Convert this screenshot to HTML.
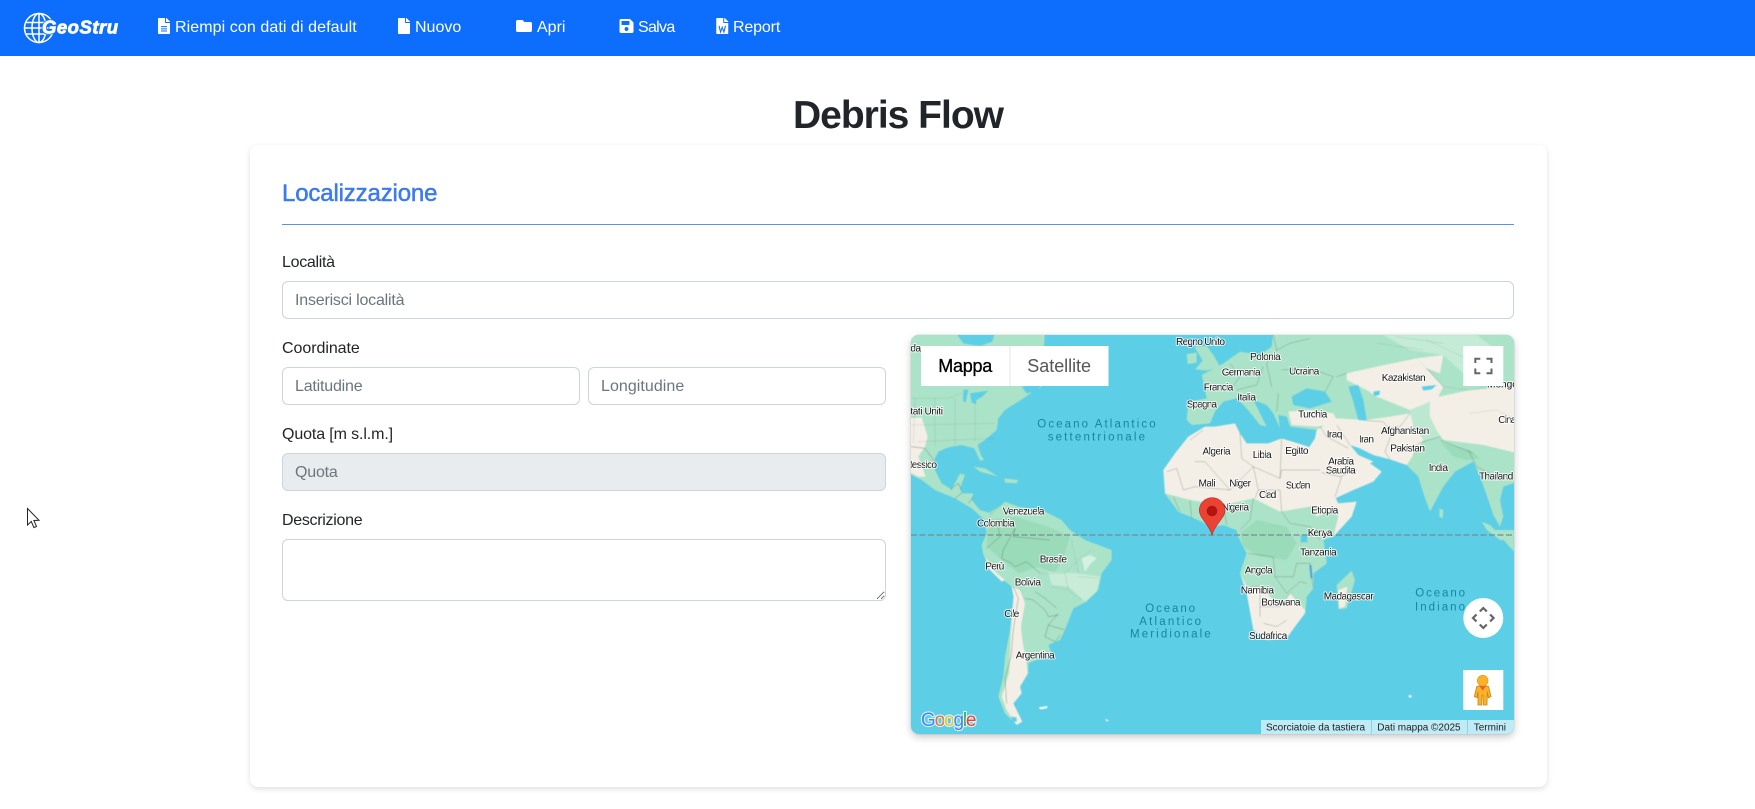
<!DOCTYPE html>
<html lang="it">
<head>
<meta charset="utf-8">
<title>Debris Flow</title>
<style>
*{box-sizing:border-box}
html,body{margin:0;padding:0;background:#fff}
body{position:relative;width:1755px;height:809px;overflow:hidden;font-family:"Liberation Sans",Arial,sans-serif;color:#212529;font-size:16px}
nav{position:absolute;left:0;top:0;width:1755px;height:56px;background:#0d6efd}
nav a{position:absolute;top:16px;color:#fff;text-decoration:none;line-height:24px;font-size:16px;white-space:nowrap}
nav svg.i{position:absolute;fill:#fff}
h1{position:absolute;left:700px;width:396px;top:91.500px;margin:0;text-align:center;font-size:39px;line-height:48px;font-weight:700;letter-spacing:-1px;color:#212529}
.card{position:absolute;left:250px;top:145px;width:1296.500px;height:642px;background:#fff;border-radius:8px;box-shadow:0 2px 6px rgba(0,0,0,.13)}
h2{position:absolute;left:282px;top:179px;margin:0;font-size:24px;line-height:30px;font-weight:400;color:#3b7bef;-webkit-text-stroke:.5px #3b7bef;letter-spacing:-.15px}
hr{position:absolute;left:282px;top:224px;width:1232px;height:1px;margin:0;border:0;background:#5c8fe8}
label{position:absolute;left:282px;line-height:24px;font-size:16px;letter-spacing:-.3px;color:#212529}
input,textarea{position:absolute;border:1px solid #ced4da;border-radius:6px;background:#fff;padding:7px 12px 5px;font:16px/24px "Liberation Sans",Arial,sans-serif;color:#212529;outline:0;margin:0;letter-spacing:-.2px}
input{height:38px}
::placeholder{color:#6c757d;opacity:1}
input:disabled{background:#e9ecef}
#map{position:absolute;left:911px;top:335px;width:603px;height:399px;border-radius:8px;overflow:hidden;background:#5ccee5}
#mapshadow{position:absolute;left:911px;top:335px;width:603px;height:399px;border-radius:8px;box-shadow:0 3px 8px rgba(0,0,0,.22),0 0 1px rgba(0,0,0,.3)}
#map svg{position:absolute;left:0;top:0;display:block}
.land{filter:blur(.45px)}
.lb text{font:10.200px "Liberation Sans",Arial,sans-serif;fill:#111;stroke:#fff;stroke-width:2px;stroke-opacity:.8;paint-order:stroke;stroke-linejoin:round}
.ws text{font:11.500px "Liberation Sans",Arial,sans-serif;fill:#17879f}
.at text{font:10px "Liberation Sans",Arial,sans-serif;fill:#222}
#cursor{position:absolute;left:26px;top:507px}
</style>
</head>
<body>
<nav>
  <svg style="position:absolute;left:20px;top:10px" width="105" height="36" viewBox="20 10 105 36">
    <g fill="none" stroke="#fff" stroke-width="1.500">
      <circle cx="39" cy="28" r="14.500"/>
      <ellipse cx="39" cy="28" rx="7" ry="14.500"/>
      <path d="M39 13.500V42.500M25.500 22.500H52M24.500 28H53.500M26 34H52"/>
    </g>
    <text x="42" y="33.500" font-family="Liberation Sans,Arial,sans-serif" font-size="18.500" font-weight="700" font-style="italic" fill="#fff" stroke="#0d6efd" stroke-width="2.500" paint-order="stroke" textLength="76">GeoStru</text>
    <text x="42" y="33.500" font-family="Liberation Sans,Arial,sans-serif" font-size="18.500" font-weight="700" font-style="italic" fill="#fff" stroke="#fff" stroke-width=".8" textLength="76">GeoStru</text>
  </svg>

  <svg class="i" style="left:158px;top:17.500px" width="12" height="16" viewBox="0 0 384 512"><path d="M224 136V0H24C10.700 0 0 10.700 0 24v464c0 13.300 10.700 24 24 24h336c13.300 0 24-10.700 24-24V160H248c-13.200 0-24-10.800-24-24zm160-14.100v6.100H256V0h6.100c6.400 0 12.500 2.500 17 7l97.900 98c4.500 4.500 7 10.600 7 16.900z"/><path fill="#0d6efd" d="M96 260h192v32H96zM96 330h192v32H96zM96 400h192v32H96z"/></svg>
  <a href="#" style="left:175px;letter-spacing:.08px">Riempi con dati di default</a>

  <svg class="i" style="left:398px;top:17.500px" width="12" height="16" viewBox="0 0 384 512"><path d="M224 136V0H24C10.700 0 0 10.700 0 24v464c0 13.300 10.700 24 24 24h336c13.300 0 24-10.700 24-24V160H248c-13.200 0-24-10.800-24-24zm160-14.100v6.100H256V0h6.100c6.400 0 12.500 2.500 17 7l97.900 98c4.500 4.500 7 10.600 7 16.900z"/></svg>
  <a href="#" style="left:415px">Nuovo</a>

  <svg class="i" style="left:516px;top:18px" width="16" height="16" viewBox="0 0 512 512"><path d="M464 128H272l-64-64H48C21.490 64 0 85.490 0 112v288c0 26.510 21.490 48 48 48h416c26.510 0 48-21.490 48-48V176c0-26.510-21.490-48-48-48z"/></svg>
  <a href="#" style="left:537px">Apri</a>

  <svg class="i" style="left:619px;top:18px" width="15" height="16" viewBox="0 0 448 512"><path d="M433.941 129.941l-83.882-83.882A48 48 0 0 0 316.118 32H48C21.490 32 0 53.490 0 80v352c0 26.510 21.490 48 48 48h352c26.510 0 48-21.490 48-48V163.882a48 48 0 0 0-14.059-33.941zM224 416c-35.346 0-64-28.654-64-64 0-35.346 28.654-64 64-64s64 28.654 64 64c0 35.346-28.654 64-64 64zm96-304.520V212c0 6.627-5.373 12-12 12H76c-6.627 0-12-5.373-12-12V108c0-6.627 5.373-12 12-12h228.520c3.183 0 6.235 1.264 8.485 3.515l3.480 3.480A11.996 11.996 0 0 1 320 111.480z"/></svg>
  <a href="#" style="left:638px;letter-spacing:-.7px">Salva</a>

  <svg class="i" style="left:716px;top:18px" width="12.500" height="16" viewBox="0 0 384 512"><path d="M224 136V0H24C10.700 0 0 10.700 0 24v464c0 13.300 10.700 24 24 24h336c13.300 0 24-10.700 24-24V160H248c-13.200 0-24-10.800-24-24zm160-14.100v6.100H256V0h6.100c6.400 0 12.500 2.500 17 7l97.900 98c4.500 4.500 7 10.600 7 16.900z"/><path fill="none" stroke="#0d6efd" stroke-width="34" d="M88 250l50 200 54-150 54 150 50-200"/></svg>
  <a href="#" style="left:733px;letter-spacing:-.15px">Report</a>
</nav>

<h1>Debris Flow</h1>
<div class="card"></div>
<h2>Localizzazione</h2>
<hr>

<label style="top:251px">Località</label>
<input type="text" placeholder="Inserisci località" style="left:282px;top:281px;width:1232px">
<label style="top:337px;letter-spacing:-.05px">Coordinate</label>
<input type="text" placeholder="Latitudine" style="left:282px;top:367px;width:298px">
<input type="text" placeholder="Longitudine" style="left:588px;top:367px;width:298px;letter-spacing:.05px">
<label style="top:423px;letter-spacing:-.12px">Quota [m s.l.m.]</label>
<input type="text" placeholder="Quota" disabled style="left:282px;top:453px;width:604px">
<label style="top:509px">Descrizione</label>
<textarea style="left:282px;top:539px;width:604px;height:62px"></textarea>

<div id="mapshadow"></div>
<div id="map">
<svg width="603" height="399" viewBox="911 335 603 399">
  <g class="land">
  <!-- Americas north -->
  <g transform="translate(905,330) scale(.33333)">
    <path fill="#abe3c8" d="M10,10 L420,10 L412,110 L410,170 L370,195 L340,215 L300,240 L280,265 L275,300 L240,330 L218,345 L228,375 L237,390 L225,392 L208,355 L170,345 L130,352 L100,365 L90,385 L90,420 L110,460 L140,478 L165,430 L180,435 L165,475 L170,490 L205,490 L200,510 L225,540 L260,550 L245,575 L200,535 L150,505 L90,480 L50,450 L10,430 Z"/>
    <path fill="#5ccee5" d="M150,5 L270,5 L262,35 L225,48 L175,40 Z"/>
    <path fill="#f4efe6" d="M10,265 L50,262 L68,320 L60,350 L40,380 L62,440 L40,440 L10,425 Z"/>
    <path fill="#5ccee5" d="M175,180 L190,178 L182,218 L174,212 Z M195,190 L250,182 L232,200 L212,212 L215,222 L200,218 Z M350,170 L410,160 L395,185 L365,190 Z"/>
    <path fill="none" stroke="#6d7f78" stroke-width="1.200" stroke-dasharray="5 3" opacity=".6" d="M20,205 L130,205 L170,190 M20,285 L270,280 M90,205 L90,345 M150,205 L150,345 M210,215 L210,335 M40,335 L270,325 M30,205 L25,340"/>
    <path fill="none" stroke="#5f6f6a" stroke-width="1.400" opacity=".85" d="M18,350 L60,355 L90,395 M135,480 L160,460 L168,478 M170,490 L150,505 M205,500 L190,520"/>
    <path fill="#abe3c8" d="M205,410 L240,415 L280,440 L250,432 L225,425 Z M298,445 L340,450 L335,460 L300,458 Z"/>
    <path fill="#abe3c8" d="M868,50 L905,48 L925,75 L945,110 L905,122 L870,118 L893,92 Z M845,72 L875,68 L875,98 L848,102 Z"/>
    <path fill="#9adcba" d="M255,545 L300,520 L340,532 L420,548 L495,600 L400,600 L300,600 L255,580 Z"/>
  </g>

  <!-- South America -->
  <g transform="translate(905,530) scale(.33333)">
    <path fill="#abe3c8" d="M260,-45 L300,-85 L340,-70 L420,-55 L470,-30 L495,0 L540,30 L620,60 L620,90 L590,130 L580,180 L545,215 L505,235 L480,300 L465,330 L430,345 L440,370 L370,400 L370,430 L345,470 L350,490 L325,520 L350,575 L335,585 L300,550 L280,500 L295,440 L300,380 L315,300 L325,200 L320,170 L270,130 L235,75 L230,45 L245,10 L240,-20 Z"/>
    <path fill="#9adcba" d="M250,-30 L330,-40 L430,-10 L495,20 L480,70 L450,130 L400,110 L340,130 L290,90 L245,50 Z"/>
    <path fill="#f4efe6" d="M320,170 L345,180 L360,220 L348,290 L352,330 L365,400 L368,430 L345,470 L350,490 L325,520 L352,575 L335,585 L305,540 L290,500 L312,430 L318,300 L326,200 Z"/>
    <path fill="#f4efe6" d="M230,45 L240,80 L270,125 L300,150 L290,155 L250,115 Z"/>
    <path fill="#d6f1e2" d="M530,85 L555,75 L575,85 L558,100 L540,125 Z"/>
    <path fill="#c8ecd8" d="M430,125 L520,130 L585,140 L575,185 L540,215 L490,170 L440,165 Z"/>
    <path fill="none" stroke="#4f5f5a" stroke-width="1.300" opacity=".75" d="M330,-5 L295,60 L290,85 L320,100 L330,110 L365,95 L405,130 M245,55 L285,20 L275,-30 M330,-5 L325,20 L435,30 M325,170 L340,205 L335,235 L325,300 L318,380 L300,445 L305,520 M360,205 L385,210 L420,240 L430,260 L460,255 M390,185 L420,205 L455,235 M460,250 L430,285 L420,320 L450,335 L467,315 M430,285 L480,300"/>
    <path fill="none" stroke="#6d7f78" stroke-width="1.200" stroke-dasharray="4 3" opacity=".65" d="M405,130 L480,130 L530,80 L560,60 M480,130 L490,180 L530,210 M520,140 L580,145 M440,170 L490,180 M500,30 L520,130"/>
    <path fill="#fff" d="M402,532 L428,528 L425,535 L405,538 Z M600,566 L612,572 L605,574 Z"/>
    <path fill="#5ccee5" d="M318,560 L335,562 L335,575 L322,575 Z"/>
  </g>

  <!-- Eurasia -->
  <g transform="translate(1210,330) scale(.33333)">
    <path fill="#abe3c8" d="M190,5 L925,5 L925,455 L880,470 L870,510 L880,560 L870,590 L850,555 L835,510 L810,440 L790,395 L735,425 L700,470 L660,545 L640,490 L625,440 L590,405 L540,388 L490,375 L450,355 L420,345 L445,375 L490,395 L480,400 L515,425 L490,455 L430,480 L375,505 L340,450 L295,355 L315,325 L320,300 L240,290 L230,260 L205,255 L210,295 L190,250 L170,225 L130,210 L160,270 L170,290 L150,285 L110,235 L80,205 L40,215 L15,245 L0,280 L-55,285 L-70,270 L-65,215 L-10,205 L-25,135 L40,100 L90,65 L150,75 L185,50 Z"/>
    <path fill="#c4ebd6" d="M520,15 L800,15 L860,60 L760,130 L700,75 L600,60 Z"/>
    <path fill="#f4efe6" d="M410,130 L500,110 L620,85 L700,170 L680,210 L600,240 L500,200 L470,180 L410,150 Z"/>
    <path fill="#f4efe6" d="M320,300 L380,265 L470,270 L540,260 L600,250 L640,330 L610,375 L590,405 L540,388 L490,375 L450,355 L420,345 L445,375 L490,395 L480,400 L515,425 L490,455 L430,480 L375,505 L340,450 L295,355 L315,325 Z"/>
    <path fill="#f4efe6" d="M640,210 L780,180 L925,170 L925,370 L820,345 L700,330 L650,260 Z"/>
    <path fill="#f4efe6" d="M235,245 L300,240 L370,250 L385,280 L320,290 L245,285 Z M620,85 L700,75 L690,130 L650,115 Z"/>
    <path fill="#bce8d1" d="M600,240 L660,215 L660,260 L690,320 L640,330 L610,290 Z"/>
    <path fill="#9adcba" d="M690,335 L780,360 L810,385 L770,390 L730,380 Z"/>
    <path fill="#5ccee5" d="M245,200 L290,175 L345,185 L365,215 L300,235 L250,225 Z M415,170 L445,165 L460,210 L470,272 L445,270 L430,215 Z M490,185 L510,182 L508,195 L492,198 Z M635,170 L680,165 L665,178 L640,182 Z"/>
    <path fill="#abe3c8" d="M815,575 L840,585 L885,630 L870,630 L830,600 Z"/>
    <path fill="#abe3c8" d="M688,535 L700,540 L698,565 L688,560 Z"/>
    <path fill="none" stroke="#5f6f6a" stroke-width="1.300" opacity=".7" d="M190,15 L200,60 L240,40 L300,25 M200,60 L170,100 L185,170 M60,100 L90,140 L60,180 L30,175 M160,110 L140,165 L80,180 M215,120 L300,115 L370,140 L345,185 M380,140 L410,130 M205,190 L200,245 M330,290 L350,320 L415,355 M380,285 L420,345 M470,272 L520,275 L545,310 L525,365 L540,388 M600,250 L570,290 L530,295 M545,310 L610,290 M610,375 L625,340 L690,320 M650,115 L700,170 M300,420 L390,440 L440,420 M395,440 L375,500 M690,330 L790,370 M775,360 L800,410 L840,430 M810,440 L870,440"/>
    <path fill="none" stroke="#6d7f78" stroke-width="1.200" stroke-dasharray="4 3" opacity=".65" d="M700,170 L780,180 L860,165 M780,250 L860,240 L920,270 M500,40 L640,60 M650,30 L780,90 M560,20 L700,40"/>
  </g>

  <!-- Africa -->
  <g transform="translate(1210,330) scale(.33333)">
    <path fill="#f4efe6" d="M-140,420 L-105,370 L-65,320 L-15,290 L15,290 L75,280 L90,310 L110,340 L175,340 L215,325 L295,350 L330,420 L375,500 L385,520 L440,515 L425,560 L370,620 L340,630 L350,700 L310,730 L310,775 L290,800 L285,850 L255,890 L230,925 L170,930 L130,900 L110,790 L90,730 L110,670 L85,620 L80,600 L40,585 L5,590 L-35,570 L-95,545 L-135,490 Z"/>
    <path fill="#abe3c8" d="M-135,490 L-60,510 L40,525 L130,505 L210,545 L300,530 L320,560 L370,540 L385,560 L370,620 L340,630 L350,700 L310,730 L310,775 L290,800 L285,840 L240,790 L210,830 L150,770 L110,770 L90,730 L110,670 L85,620 L80,600 L40,585 L5,590 L-35,570 L-95,545 Z"/>
    <path fill="#9adcba" d="M90,610 L140,570 L230,590 L260,640 L230,690 L150,680 L100,650 Z"/>
    <path fill="none" stroke="#5f6f6a" stroke-width="1.300" opacity=".7" d="M-20,300 L-60,330 M90,310 L95,385 L130,410 L210,445 L215,325 M-130,425 L-100,415 L-80,480 L-45,470 L60,480 L130,410 M-45,395 L-15,395 L60,480 M130,410 L145,480 L135,505 M210,445 L215,420 L330,420 M145,480 L210,480 L215,545 L240,580 L300,590 L330,630 M300,530 L380,540 M-110,500 L-90,545 M-60,510 L-55,565 M-20,510 L-15,575 M40,525 L50,585 M130,505 L120,570 L90,600 M115,670 L190,680 L195,740 L250,740 L260,700 L300,700 M195,740 L230,790 L270,755 L290,760 M120,770 L150,770 L150,860 M150,830 L210,830 L240,790 M160,880 L200,890 L230,870 M300,700 L310,775"/>
    <path fill="#5ccee5" d="M272,615 L292,615 L292,637 L272,637 Z"/>
    <path fill="#4c9fd8" d="M298,705 L304,705 L308,745 L302,745 Z"/>
  </g>
  <g transform="translate(1210,530) scale(.33333)">
    <path fill="#abe3c8" d="M380,165 L425,122 L435,150 L410,235 L385,238 Z"/>
    <path fill="#f4efe6" d="M385,180 L412,170 L405,230 L388,235 Z"/>
    <path fill="#abe3c8" d="M855,0 L912,0 L912,65 L885,35 Z"/>
    <path fill="#fff" d="M596,495 L606,497 L603,503 L597,502 Z"/>
  </g>
  </g>

  <!-- Equator -->
  <line x1="911" y1="535" x2="1514" y2="535" stroke="#7d8b97" stroke-opacity=".85" stroke-width="1.400" stroke-dasharray="6 2.500"/>

  <!-- Water labels -->
  <g class="ws">
    <text x="1037.300" y="427.300" textLength="118.300">Oceano Atlantico</text>
    <text x="1047.700" y="440.300" textLength="97.300">settentrionale</text>
    <text x="1145.300" y="612" textLength="49.700">Oceano</text>
    <text x="1139.300" y="625" textLength="61.700">Atlantico</text>
    <text x="1130" y="637.700" textLength="80.700">Meridionale</text>
    <text x="1415.300" y="596.700" textLength="49.700">Oceano</text>
    <text x="1415" y="610.300" textLength="50">Indiano</text>
  </g>

  <!-- Land labels -->
  <g class="lb">
    <text x="1176" y="345" textLength="49">Regno Unito</text>
    <text x="1250" y="360" textLength="30.700">Polonia</text>
    <text x="1221.700" y="375.300" textLength="39">Germania</text>
    <text x="1289" y="374.700" textLength="30.300">Ucraina</text>
    <text x="1203.700" y="390.300" textLength="29.600">Francia</text>
    <text x="1237.300" y="400.700" textLength="18.700">Italia</text>
    <text x="1186.700" y="407.300" textLength="30.400">Spagna</text>
    <text x="1298" y="417.700" textLength="29.300">Turchia</text>
    <text x="1381.700" y="381" textLength="44">Kazakistan</text>
    <text x="1487" y="387.300" textLength="41">Mongolia</text>
    <text x="1498.300" y="423" textLength="18">Cina</text>
    <text x="1381" y="434" textLength="48.300">Afghanistan</text>
    <text x="1326.700" y="437.700" textLength="15.700">Iraq</text>
    <text x="1359" y="442.700" textLength="15">Iran</text>
    <text x="1390.300" y="451.700" textLength="34.700">Pakistan</text>
    <text x="1328.300" y="464.300" textLength="25.700">Arabia</text>
    <text x="1325.700" y="473.700" textLength="30">Saudita</text>
    <text x="1428.700" y="471" textLength="19.300">India</text>
    <text x="1479" y="479.700" textLength="34.300">Thailand</text>
    <text x="1285.300" y="454" textLength="23.300">Egitto</text>
    <text x="1252.700" y="458" textLength="19">Libia</text>
    <text x="1202.500" y="454.700" textLength="28">Algeria</text>
    <text x="1198.500" y="486.700" textLength="17">Mali</text>
    <text x="1229.300" y="486.700" textLength="21.700">Niger</text>
    <text x="1259" y="498" textLength="17.300">Ciad</text>
    <text x="1285.700" y="488.700" textLength="24.700">Sudan</text>
    <text x="1221.700" y="510.700" textLength="27.300">Nigeria</text>
    <text x="1311.300" y="513.700" textLength="27">Etiopia</text>
    <text x="1307.700" y="536" textLength="24.700">Kenya</text>
    <text x="1300" y="555.700" textLength="36.700">Tanzania</text>
    <text x="1244.700" y="573.300" textLength="28">Angola</text>
    <text x="1240.700" y="593.700" textLength="33.300">Namibia</text>
    <text x="1261.300" y="605.700" textLength="39.300">Botswana</text>
    <text x="1323.700" y="599.700" textLength="50">Madagascar</text>
    <text x="1249" y="639" textLength="38.300">Sudafrica</text>
    <text x="1002.700" y="514.300" textLength="41.700">Venezuela</text>
    <text x="977" y="526.700" textLength="37.700">Colombia</text>
    <text x="985.300" y="569.700" textLength="19">Perù</text>
    <text x="1039.700" y="562.300" textLength="27.300">Brasile</text>
    <text x="1014.700" y="585.700" textLength="26.300">Bolivia</text>
    <text x="1004.300" y="617" textLength="15">Cile</text>
    <text x="1015.700" y="658.700" textLength="39">Argentina</text>
    <text x="904" y="414.400" textLength="39">Stati Uniti</text>
    <text x="904" y="468" textLength="33">Messico</text>
    <text x="889" y="351.700" textLength="32">Canada</text>
  </g>

  <!-- Marker -->
  <path d="M1212,535 C1209,524 1199.300,518 1199.300,510.500 A12.800,12.800 0 0 1 1225,510.500 C1225,518 1215,524 1212,535 Z" fill="#ea4335" stroke="#c5221f" stroke-width=".6"/>
  <circle cx="1212" cy="511" r="5.300" fill="#b3140f"/>

  <!-- Map type control -->
  <rect x="921" y="346" width="187.500" height="40" fill="#fff"/>
  <line x1="1010" y1="346" x2="1010" y2="386" stroke="#e6e6e6"/>
  <text x="938.300" y="372" font-family="Liberation Sans,Arial,sans-serif" font-size="18" fill="#000" stroke="#000" stroke-width=".3" textLength="54">Mappa</text>
  <text x="1027.300" y="372" font-family="Liberation Sans,Arial,sans-serif" font-size="18" fill="#565656" textLength="63.700">Satellite</text>

  <!-- Fullscreen -->
  <rect x="1463.300" y="346" width="40" height="40" fill="#fff"/>
  <path fill="none" stroke="#666" stroke-width="2" d="M1475.300,363 V358.700 H1480.300 M1486.500,358.700 H1491.500 V363 M1491.500,368.500 V373.300 H1486.500 M1480.300,373.300 H1475.300 V368.500"/>

  <!-- Pan control -->
  <circle cx="1483.300" cy="618" r="20" fill="#fff"/>
  <path fill="none" stroke="#666" stroke-width="2.200" d="M1479.800,611.500 L1483.300,608 L1486.800,611.500 M1479.800,624.500 L1483.300,628 L1486.800,624.500 M1476.500,614.500 L1473,618 L1476.500,621.500 M1490.100,614.500 L1493.600,618 L1490.100,621.500"/>

  <!-- Pegman -->
  <rect x="1463.300" y="670" width="40" height="40" fill="#fff"/>
  <g transform="translate(1210,530) scale(.33333)">
    <path fill="#fbb12a" stroke="#c98a10" stroke-width="2.500" d="M800,470 Q818,462 836,470 L843,500 L835,503 L832,485 L831,525 L820,525 L819,495 L816,495 L815,525 L804,525 L804,485 L801,503 L793,500 Z"/>
    <circle cx="818" cy="452" r="16" fill="#fbb12a" stroke="#e09a10" stroke-width="2"/>
    <path fill="#e8622a" d="M808,468 L828,468 L818,482 Z"/>
  </g>

  <!-- Attribution -->
  <rect x="1261" y="720" width="253" height="14" fill="#fff" fill-opacity=".6"/>
  <path stroke="#8fcfe0" stroke-width="1" d="M1371.500,720V734M1467.500,720V734"/>
  <g class="at">
    <text x="1266" y="730.300" textLength="99">Scorciatoie da tastiera</text>
    <text x="1377.300" y="730.300" textLength="83.300">Dati mappa ©2025</text>
    <text x="1473.700" y="730.300" textLength="32.300">Termini</text>
  </g>

  <!-- Google logo -->
  <text x="921" y="726" font-family="Liberation Sans,Arial,sans-serif" font-size="19" font-weight="400" stroke="#fff" stroke-width="2.200" stroke-opacity=".75" paint-order="stroke" textLength="55.500"><tspan fill="#4285f4">G</tspan><tspan fill="#e8703a">o</tspan><tspan fill="#f5c02c">o</tspan><tspan fill="#4285f4">g</tspan><tspan fill="#34a853">l</tspan><tspan fill="#ea4335">e</tspan></text>
</svg>
</div>

<svg id="cursor" width="16" height="24" viewBox="0 0 16 24"><path d="M1.500 1.500 V18 L5.300 14.500 L7.900 20.600 L10.500 19.500 L7.900 13.500 L13 13.300 Z" fill="#fff" stroke="#222" stroke-width="1"/></svg>
</body>
</html>
